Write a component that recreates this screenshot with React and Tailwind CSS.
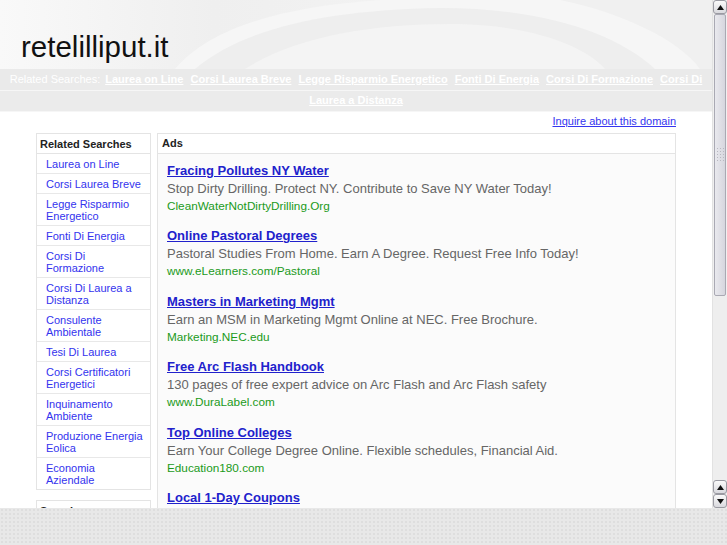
import React from "react";

const navLinks = [
  "Laurea on Line",
  "Corsi Laurea Breve",
  "Legge Risparmio Energetico",
  "Fonti Di Energia",
  "Corsi Di Formazione",
  "Corsi Di Laurea a Distanza",
];

// line breaks follow the narrow sidebar column
const related = [
  "Laurea on Line",
  "Corsi Laurea Breve",
  "Legge Risparmio\nEnergetico",
  "Fonti Di Energia",
  "Corsi Di\nFormazione",
  "Corsi Di Laurea a\nDistanza",
  "Consulente\nAmbientale",
  "Tesi Di Laurea",
  "Corsi Certificatori\nEnergetici",
  "Inquinamento\nAmbiente",
  "Produzione Energia\nEolica",
  "Economia\nAziendale",
];

const ads = [
  {
    title: "Fracing Pollutes NY Water",
    desc: "Stop Dirty Drilling. Protect NY. Contribute to Save NY Water Today!",
    url: "CleanWaterNotDirtyDrilling.Org",
  },
  {
    title: "Online Pastoral Degrees",
    desc: "Pastoral Studies From Home. Earn A Degree. Request Free Info Today!",
    url: "www.eLearners.com/Pastoral",
  },
  {
    title: "Masters in Marketing Mgmt",
    desc: "Earn an MSM in Marketing Mgmt Online at NEC. Free Brochure.",
    url: "Marketing.NEC.edu",
  },
  {
    title: "Free Arc Flash Handbook",
    desc: "130 pages of free expert advice on Arc Flash and Arc Flash safety",
    url: "www.DuraLabel.com",
  },
  {
    title: "Top Online Colleges",
    desc: "Earn Your College Degree Online. Flexible schedules, Financial Aid.",
    url: "Education180.com",
  },
  {
    title: "Local 1-Day Coupons",
    desc: "Get 50-90% off the best things to do in your city. Sign up now!",
    url: "www.Groupon.com",
  },
];

const Swirl = () => (
  <svg
    className="absolute inset-0"
    width="712"
    height="69"
    viewBox="0 0 712 69"
    preserveAspectRatio="none"
  >
    <defs>
      <linearGradient id="hg" x1="0" x2="1" y1="0" y2="0">
        <stop offset="0" stopColor="#f9f9f9" />
        <stop offset="0.3" stopColor="#efefef" />
        <stop offset="0.6" stopColor="#f3f3f3" />
        <stop offset="1" stopColor="#f7f7f7" />
      </linearGradient>
    </defs>
    <rect width="712" height="69" fill="url(#hg)" />
    <path d="M175 69 C 215 22, 300 2, 420 -2 L 712 -2 L 712 69 Z" fill="#f6f6f6" />
    <path d="M195 69 C 245 27, 330 10, 440 8 C 540 8, 615 32, 655 69 Z" fill="#eeeeee" />
    <path d="M245 69 C 295 37, 370 24, 450 24 C 530 24, 585 46, 605 69 Z" fill="#f4f4f4" />
    <path d="M560 0 C 620 12, 680 40, 700 69 L 712 69 L 712 0 Z" fill="#f0f0f0" />
  </svg>
);

const Arrow = ({ down }) => (
  <div className="h-[14px] w-[14px] rounded-[3px] border border-[#9a9aa2] bg-[linear-gradient(to_bottom,#fafafa,#d9d9de)] flex items-center justify-center">
    <svg width="7" height="5" viewBox="0 0 7 5">
      <path d={down ? "M0 0 L7 0 L3.5 5 Z" : "M0 5 L7 5 L3.5 0 Z"} fill="#111" />
    </svg>
  </div>
);

const Scrollbar = () => (
  <div className="w-[15px] h-full flex flex-col bg-[#f0f0f0] border-l border-[#e2e2e2]">
    <Arrow />
    <div className="h-[282px] mx-[1px] rounded-[2px] border border-[#a9a9b3] bg-[linear-gradient(to_right,#e9e9ee,#d6d6de)] flex items-center justify-center">
      <div className="w-[8px] h-[16px] bg-[radial-gradient(#b8b8c0_1px,transparent_1px)] bg-[length:3px_3px]" />
    </div>
    <div className="flex-1 bg-[#eeeeee]" />
    <Arrow />
    <Arrow down />
  </div>
);

export default function App() {
  return (
    <div className="w-[727px] h-[545px] flex flex-col overflow-hidden font-['Liberation_Sans',Arial,sans-serif]">
      <div className="flex h-[508px]">
        <div className="flex-1 overflow-hidden bg-white">
          {/* header */}
          <div className="relative h-[69px]">
            <Swirl />
            <div className="relative pl-[21px] pt-[31px] text-[29.5px] leading-[32px] text-[#111]">
              retelilliput.it
            </div>
          </div>

          {/* nav */}
          <div className="h-[43px] px-[8px] text-center text-[11px] leading-[21px] text-white bg-[linear-gradient(to_bottom,#eaeaea_0,#eaeaea_21px,#f6f6f6_21px,#f6f6f6_22px,#ebebeb_22px,#ebebeb_42px,#f6f6f6_42px)] overflow-hidden">
            <span className="mr-[5px]">Related Searches:</span>
            {navLinks.map((l, i) => (
              <React.Fragment key={l}>
                <a
                  href="#"
                  className={`underline font-bold ${
                    i < navLinks.length - 1 ? "mr-[4px]" : ""
                  }`}
                >
                  {l}
                </a>
                {i < navLinks.length - 1 && " "}
              </React.Fragment>
            ))}
          </div>

          {/* content */}
          <div className="pl-[36px] w-[676px]">
            <div className="text-right pt-[3px] pb-[5px] text-[11px] leading-[13px]">
              <a href="#" className="text-[#3535f0] underline">
                Inquire about this domain
              </a>
            </div>

            <div className="flex gap-[6px] items-start">
              {/* sidebar */}
              <div className="w-[115px] shrink-0">
                <div className="border border-[#e4e4e4]">
                  <div className="h-[20px] px-[3px] text-[11px] leading-[20px] font-bold text-[#222] border-b border-[#e4e4e4]">
                    Related Searches
                  </div>
                  {related.map((r, i) => (
                    <div
                      key={r}
                      className={`pl-[9px] pr-[2px] pt-[4px] pb-[3px] text-[11px] leading-[12px] whitespace-pre-line ${
                        i < related.length - 1 ? "border-b border-[#e8e8e8]" : ""
                      }`}
                    >
                      <a href="#" className="text-[#3333ee]">
                        {r}
                      </a>
                    </div>
                  ))}
                </div>
                <div className="mt-[10px] border border-[#e4e4e4] h-[40px]">
                  <div className="px-[3px] text-[11px] leading-[20px] font-bold text-[#222]">
                    Search
                  </div>
                </div>
              </div>

              {/* ads */}
              <div className="flex-1 border border-[#e4e4e4] bg-[#fbfbfb] h-[400px]">
                <div className="h-[20px] px-[4px] text-[11px] leading-[19px] font-bold text-[#222] border-b border-[#e4e4e4] bg-white">
                  Ads
                </div>
                <div className="pl-[9px] pt-[8px]">
                  {ads.map((a) => (
                    <div key={a.title} className="mb-[13.4px]">
                      <div className="text-[13px] leading-[18px]">
                        <a href="#" className="font-bold text-[#2121cc] underline">
                          {a.title}
                        </a>
                      </div>
                      <div className="text-[13px] leading-[18px] text-[#666] whitespace-nowrap">
                        {a.desc}
                      </div>
                      <div className="text-[11.75px] leading-[16px] text-[#1a9a1a]">
                        {a.url}
                      </div>
                    </div>
                  ))}
                </div>
              </div>
            </div>
          </div>
        </div>
        <Scrollbar />
      </div>
      <div className="h-[37px] bg-[#e8e8e8] bg-[radial-gradient(#dedede_1px,transparent_1px)] bg-[length:4px_4px]" />
    </div>
  );
}
